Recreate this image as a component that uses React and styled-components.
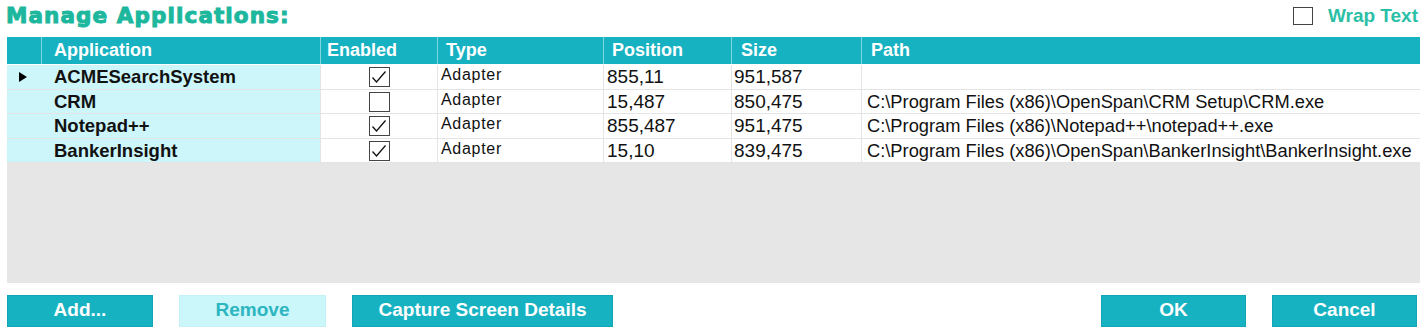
import React from 'react'
import styled, { createGlobalStyle } from 'styled-components'

const Global = createGlobalStyle`
  html, body { margin: 0; padding: 0; background: #ffffff; }
  body { font-family: "Liberation Sans", Arial, sans-serif; }
`

const Page = styled.div`
  width: 1425px;
  height: 331px;
  box-sizing: border-box;
  padding: 0 5px 0 7px;
  display: flex;
  flex-direction: column;
`

const TopBar = styled.div`
  display: flex;
  justify-content: space-between;
  align-items: center;
  height: 31px;
  margin-left: -1px;
`

const Title = styled.h1`
  margin: 0;
  font-family: "DejaVu Sans", "Liberation Sans", sans-serif;
  font-size: 21.5px;
  font-weight: bold;
  color: #1cb79d;
  letter-spacing: 1.1px;
  -webkit-text-stroke: 1px #1cb79d;
`

const WrapToggle = styled.label`
  display: flex;
  align-items: center;
  gap: 15px;
  font-size: 19px;
  font-weight: bold;
  color: #2abfa6;
  margin-right: 2px;
`

const Box = styled.span`
  width: ${p => p.$w || 20}px;
  height: ${p => p.$h || 18}px;
  border: 1px solid #444;
  background: #fff;
  box-sizing: border-box;
  display: inline-flex;
  align-items: center;
  justify-content: center;
`

const Grid = styled.div`
  margin-top: 6px;
  height: 246px;
  background: #e6e6e6;
  display: flex;
  flex-direction: column;
`

const cols = '34px 279px 117px 166px 128px 130px 1fr'

const HeadRow = styled.div`
  display: grid;
  grid-template-columns: ${cols};
  height: 27px;
  background: #17b2c2;
  border-bottom: 1px solid #ffffff;
`

const HeadCell = styled.div`
  color: #ffffff;
  font-weight: bold;
  font-size: 18px;
  padding-left: ${p => p.$pad || 7}px;
  display: flex;
  align-items: center;
  border-left: 1px solid #7fd6de;
  &:first-child { border-left: none; }
`

const Row = styled.div`
  display: grid;
  grid-template-columns: ${cols};
  height: 24.5px;
  background: #ffffff;
  border-bottom: 1px solid #e4e4e4;
  box-sizing: border-box;
`

const Cell = styled.div`
  display: flex;
  align-items: center;
  justify-content: ${p => (p.$center ? 'center' : 'flex-start')};
  padding-left: ${p => (p.$center ? 0 : p.$pad || 4)}px;
  font-size: ${p => p.$size || 18}px;
  font-weight: ${p => (p.$bold ? 'bold' : 'normal')};
  letter-spacing: ${p => p.$ls || 0}px;
  color: #111;
  background: ${p => (p.$cyan ? '#cdf6fa' : '#ffffff')};
  border-left: 1px solid ${p => (p.$cyan ? '#cdf6fa' : '#e4e4e4')};
  white-space: nowrap;
  overflow: hidden;
  padding-top: ${p => (p.$up ? 0 : 1)}px;
  padding-bottom: ${p => (p.$up ? 3 : 0)}px;
  box-sizing: border-box;
`

const Arrow = styled.span`
  width: 0;
  height: 0;
  border-top: 5px solid transparent;
  border-bottom: 5px solid transparent;
  border-left: 8px solid #000;
  margin-left: 7px;
`

const Footer = styled.div`
  display: flex;
  align-items: center;
  margin-top: 12px;
  gap: 26px;
`

const Button = styled.button`
  width: ${p => p.$w}px;
  height: 32px;
  border: 1px solid ${p => (p.$light ? '#c4f1f7' : '#12a5b5')};
  background: ${p => (p.$light ? '#cbf7fb' : '#17b2c2')};
  color: ${p => (p.$light ? '#2db5c0' : '#ffffff')};
  font-family: "Liberation Sans", Arial, sans-serif;
  font-weight: bold;
  font-size: 19px;
  padding: 0 0 2px;
  cursor: pointer;
  margin-left: ${p => (p.$push ? 'auto' : '0')};
  margin-right: ${p => p.$mr || 0}px;
`

const Check = ({ on }) => (
  <Box $w={21} $h={20}>
    {on && (
      <svg width="16" height="14" viewBox="0 0 16 14">
        <path d="M1.5 7.5 L5.5 12 L14.5 1.5" fill="none" stroke="#111" strokeWidth="1.3" />
      </svg>
    )}
  </Box>
)

const apps = [
  { name: 'ACMESearchSystem', on: true, pos: '855,11', size: '951,587', path: '', cur: true },
  { name: 'CRM', on: false, pos: '15,487', size: '850,475', path: 'C:\\Program Files (x86)\\OpenSpan\\CRM Setup\\CRM.exe' },
  { name: 'Notepad++', on: true, pos: '855,487', size: '951,475', path: 'C:\\Program Files (x86)\\Notepad++\\notepad++.exe' },
  { name: 'BankerInsight', on: true, pos: '15,10', size: '839,475', path: 'C:\\Program Files (x86)\\OpenSpan\\BankerInsight\\BankerInsight.exe' },
]

export default function App() {
  return (
    <>
      <Global />
      <Page>
        <TopBar>
          <Title>Manage Applications:</Title>
          <WrapToggle>
            <Box />
            Wrap Text
          </WrapToggle>
        </TopBar>
        <Grid>
          <HeadRow>
            <HeadCell />
            <HeadCell $pad={12}>Application</HeadCell>
            <HeadCell $pad={6}>Enabled</HeadCell>
            <HeadCell $pad={8}>Type</HeadCell>
            <HeadCell $pad={8}>Position</HeadCell>
            <HeadCell $pad={9}>Size</HeadCell>
            <HeadCell $pad={9}>Path</HeadCell>
          </HeadRow>
          {apps.map(a => (
            <Row key={a.name}>
              <Cell $cyan>{a.cur && <Arrow />}</Cell>
              <Cell $cyan $bold $size={18.5} $pad={12}>{a.name}</Cell>
              <Cell $center>
                <Check on={a.on} />
              </Cell>
              <Cell $size={16} $ls={0.7} $pad={3} $up>Adapter</Cell>
              <Cell $size={19} $pad={3}>{a.pos}</Cell>
              <Cell $size={19} $pad={2}>{a.size}</Cell>
              <Cell $size={18.3} $pad={5}>{a.path}</Cell>
            </Row>
          ))}
        </Grid>
        <Footer>
          <Button $w={146}>Add...</Button>
          <Button $w={147} $light>Remove</Button>
          <Button $w={261}>Capture Screen Details</Button>
          <Button $w={145} $push>OK</Button>
          <Button $w={145} $mr={3}>Cancel</Button>
        </Footer>
      </Page>
    </>
  )
}
